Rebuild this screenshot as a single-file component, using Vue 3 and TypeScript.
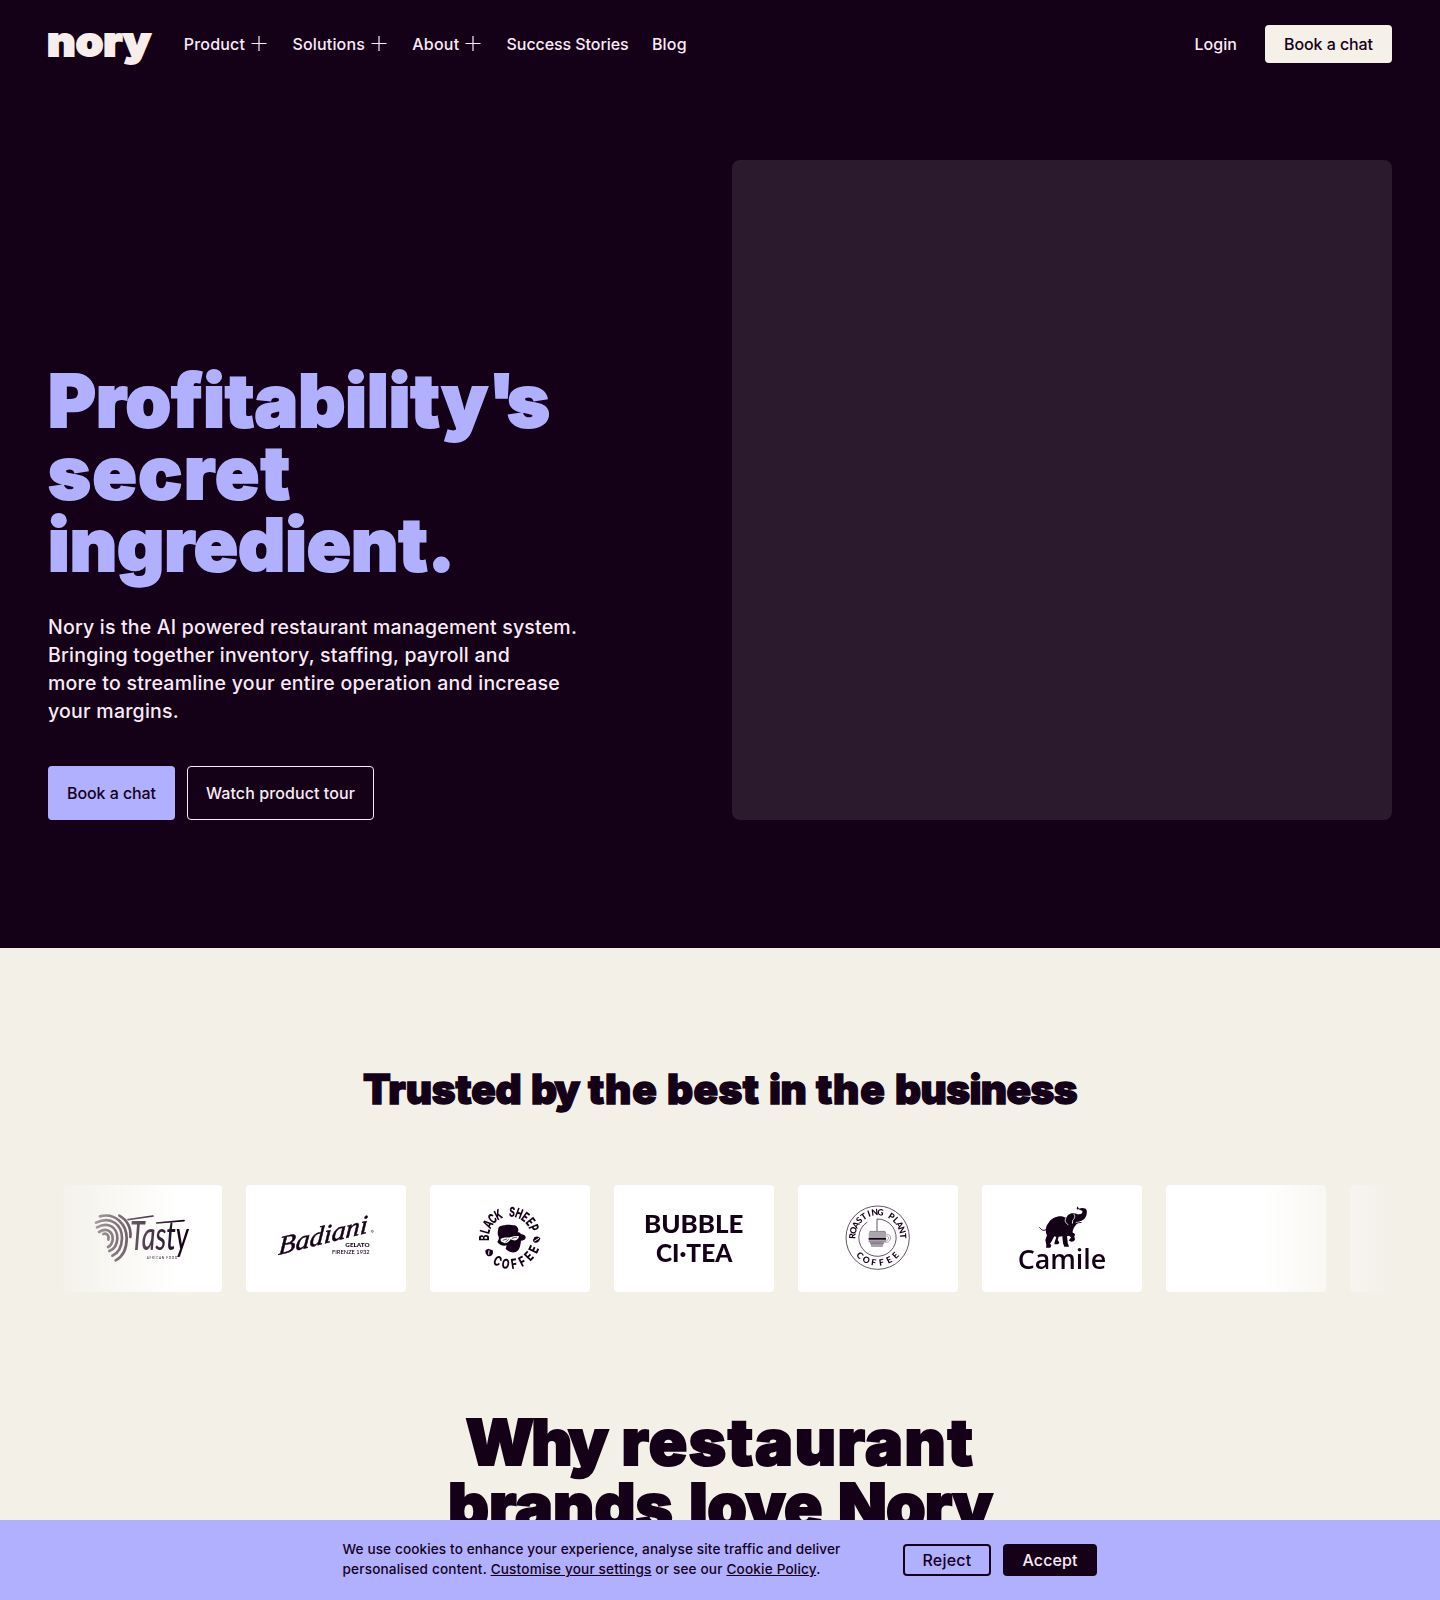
<script setup lang="ts">
interface Run { text: string; width: number }
interface NavItem { label: string; width: number; menu: boolean }
interface RingLetter { char: string; angle: number }

const navItems: NavItem[] = [
  { label: 'Product', width: 61.5, menu: true },
  { label: 'Solutions', width: 72.5, menu: true },
  { label: 'About', width: 47, menu: true },
  { label: 'Success Stories', width: 122, menu: false },
  { label: 'Blog', width: 35, menu: false },
]

const heroLines: Run[][] = [
  [{ text: 'Profitability', width: 440 }, { text: "'s", width: 55 }],
  [{ text: 'secret', width: 243.5 }],
  [{ text: 'ingredient.', width: 407 }],
]

const introLines: Run[] = [
  { text: 'Nory is the AI powered restaurant management system.', width: 529 },
  { text: 'Bringing together inventory, staffing, payroll and', width: 462 },
  { text: 'more to streamline your entire operation and increase', width: 512 },
  { text: 'your margins.', width: 131 },
]

const trustedWords: Run[] = [
  { text: 'Trusted', width: 158.5 },
  { text: 'by', width: 47.5 },
  { text: 'the', width: 69.5 },
  { text: 'best', width: 92.5 },
  { text: 'in', width: 37.5 },
  { text: 'the', width: 69.5 },
  { text: 'business', width: 182 },
]

const whyLines: Run[][] = [
  [{ text: 'Why', width: 140 }, { text: 'restaurant', width: 353 }],
  [{ text: 'brands', width: 225 }, { text: 'love', width: 133 }, { text: 'Nory', width: 154 }],
]

// Tracks a run of text so that it fills the given measure.
const vFit = {
  mounted(el: HTMLElement, binding: { value: number }) {
    const count = (el.textContent ?? '').length
    const natural = el.getBoundingClientRect().width
    el.style.letterSpacing = `${(binding.value - natural) / count}px`
  },
}

// Spreads the letters of a word evenly between two angles of a badge.
function ring(word: string, from: number, to: number): RingLetter[] {
  const step = (to - from) / (word.length - 1)
  return [...word].map((char, i) => ({ char, angle: from + step * i }))
}

const sheepTop = ring('BLACK SHEEP', -90, 68)
const sheepBottom = ring('COFFEE', 28, -64)
const plantTop = ring('ROASTING PLANT', -86, 86)
const plantBottom = ring('COFFEE', 45, -45)
</script>

<template>
  <div class="page">
    <section class="hero">
      <header class="bar">
        <svg class="logo" width="106" height="40" viewBox="0 0 106 40" role="img" aria-label="nory">
          <text x="-1" y="28.5" textLength="104" lengthAdjust="spacingAndGlyphs">nory</text>
        </svg>
        <nav class="nav">
          <a v-for="item in navItems" :key="item.label" class="nav-item">
            <span v-fit="item.width">{{ item.label }}</span>
            <svg v-if="item.menu" width="20" height="20" viewBox="0 0 20 20">
              <path d="M2.5 9.5H17.5M10 2V17" />
            </svg>
          </a>
        </nav>
        <div class="account">
          <a class="login"><span v-fit="42.5">Login</span></a>
          <a class="btn btn-cream"><span v-fit="89">Book a chat</span></a>
        </div>
      </header>
      <div class="hero-body">
        <div class="copy">
          <h1>
            <span v-for="(line, i) in heroLines" :key="i" class="line">
              <span v-for="run in line" :key="run.text" v-fit="run.width">{{ run.text }}</span>
            </span>
          </h1>
          <p class="intro">
            <span v-for="line in introLines" :key="line.text" v-fit="line.width" class="line">{{ line.text }}</span>
          </p>
          <div class="actions">
            <a class="btn btn-violet"><span v-fit="89">Book a chat</span></a>
            <a class="btn btn-outline"><span v-fit="149">Watch product tour</span></a>
          </div>
        </div>
        <div class="media"></div>
      </div>
    </section>

    <section class="trusted">
      <h2>
        <span v-for="(word, i) in trustedWords" :key="i" v-fit="word.width">{{ word.text }}</span>
      </h2>
      <div class="marquee">
        <div class="card">
          <svg viewBox="66 45 480 321">
            <g fill="none" stroke="#140017" stroke-width="8" stroke-linecap="round">
              <path d="M238 137C262 150 274 175 271 201" />
              <path d="M180 139C228 127 260 165 260 205C260 240 245 262 227 271" />
              <path d="M168 158C214 136 246 165 246 205C245 232 233 250 217 257" />
              <path d="M171 172C205 154 232 172 232 205C231 228 222 238 208 243" />
              <path d="M177 186C203 170 219 188 218 208C217 220 211 227 204 231" />
              <path d="M190 192C201 188 208 198 205 209" />
            </g>
            <path d="M264 149L339 138M350 159L432 152" fill="none" stroke="#140017" stroke-width="5" stroke-linecap="round" />
            <text class="hand" x="270" y="239" textLength="176" lengthAdjust="spacingAndGlyphs">Tasty</text>
            <text class="small" x="320" y="268" font-size="9" textLength="92">AFRICAN FOOD</text>
          </svg>
        </div>
        <div class="card">
          <svg viewBox="618 45 480 321">
            <text class="script" transform="translate(714 255) rotate(-14) skewX(-18)" textLength="276" lengthAdjust="spacingAndGlyphs">Badiani</text>
            <circle cx="997" cy="184" r="3" fill="none" stroke="#140017" stroke-width="1.5" />
            <text class="small heavy" x="916" y="231" font-size="18" textLength="73" lengthAdjust="spacingAndGlyphs">GELATO</text>
            <text class="small" x="876" y="251" font-size="18" textLength="113" lengthAdjust="spacingAndGlyphs">FIRENZE 1932</text>
          </svg>
        </div>
        <div class="card">
          <svg viewBox="30 45 480 321">
            <g class="sheep-ring">
              <text v-for="(l, i) in sheepTop" :key="'t' + i" :transform="`translate(270 203) rotate(${l.angle}) translate(0 -63) scale(.66 1)`">{{ l.char }}</text>
              <text v-for="(l, i) in sheepBottom" :key="'b' + i" :transform="`translate(270 203) rotate(${l.angle}) translate(0 94) scale(.74 1)`">{{ l.char }}</text>
            </g>
            <path fill="#140017" d="M236 200C230 190 235 182 235 175C238 165 251 167 257 165C266 163 276 166 284 166C294 169 298 180 293 187C300 185 301 192 306 193C312 194 318 198 317 204C315 211 309 211 303 212C301 226 300 239 288 246C277 250 264 245 257 236L260 226C249 230 238 224 232 216C236 209 238 206 236 200Z" />
            <path fill="#fff" d="M242 207C252 200 263 204 270 202C280 198 290 197 297 198C296 206 291 213 280 211L272 208C268 214 258 224 248 217C243 215 241 211 242 207Z" />
            <path fill="none" stroke="#140017" stroke-width="2" d="M248 211L261 207M276 205L291 201M256 217L266 208" />
            <path fill="#140017" d="M197 240L205 236L218 241C221 250 217 259 208 259C200 259 194 248 197 240ZM341 206C343 198 355 198 361 205C359 214 351 222 342 217C338 213 338 209 341 206Z" />
            <path fill="none" stroke="#fff" stroke-width="3" d="M207 241L206 254M343 213L357 205" />
          </svg>
        </div>
        <div class="card">
          <svg viewBox="582 45 480 321">
            <text class="bubble" x="672" y="188" textLength="298" lengthAdjust="spacingAndGlyphs">BUBBLE</text>
            <text class="bubble" x="708" y="275" textLength="229" lengthAdjust="spacingAndGlyphs">CI·TEA</text>
          </svg>
        </div>
        <div class="card">
          <svg viewBox="54 45 480 321">
            <g fill="none" stroke="#140017" stroke-width="2">
              <circle cx="293" cy="203" r="95" />
              <path d="M291 184V147A56 56 0 1 1 262 156" />
            </g>
            <g class="plant-ring">
              <text v-for="(l, i) in plantTop" :key="'t' + i" :transform="`translate(293 203) rotate(${l.angle}) translate(0 -67)`">{{ l.char }}</text>
              <text v-for="(l, i) in plantBottom" :key="'b' + i" :transform="`translate(293 203) rotate(${l.angle}) translate(0 84)`">{{ l.char }}</text>
            </g>
            <path fill="#aaa5ac" d="M269 184H315L318 190V216H312L308 231H274L270 216H266V190Z" />
            <path fill="none" stroke="#57495a" stroke-width="1.5" d="M269 184H315L318 190M266 216H317M270 221H312M319 193C336 191 336 218 317 217M319 198C328 197 328 212 318 211" />
            <path fill="#140017" d="M266 204H318V209H266Z" />
          </svg>
        </div>
        <div class="card">
          <svg viewBox="606 45 480 321">
            <path fill="#140017" d="M806 158C812 147 828 139 842 139C850 138 855 144 859 143C863 134 871 129 880 130C888 130 893 134 897 133C905 133 909 127 907 123C902 118 895 121 890 117L892 109L897 116C905 112 918 113 920 121C922 134 918 145 907 151C904 154 899 152 899 155L907 158L895 160C889 161 888 166 883 171C880 177 877 183 878 188C885 189 887 195 883 199L885 209C881 216 872 217 866 211L870 207L873 202L867 197L861 199L863 215C862 220 866 224 867 230H853L849 220L847 199L836 200L833 210L838 217L835 223H823L824 216L829 201L823 199L815 214L810 221L814 226L811 233H798L799 225L796 210L801 196C796 187 796 172 803 162Z" />
            <path fill="none" stroke="#140017" stroke-width="3" stroke-linecap="round" d="M801 177C792 184 786 181 782 176L779 173" />
            <path fill="none" stroke="#fff" stroke-width="2.5" d="M858 144C853 151 856 160 865 164M881 132C887 138 884 146 878 151L877 161" />
            <path fill="none" stroke="#fff" stroke-width="2" d="M887 158L901 155" />
            <text class="camile" x="713" y="298" textLength="266" lengthAdjust="spacingAndGlyphs">Camile</text>
          </svg>
        </div>
        <div class="card"></div>
        <div class="card"></div>
      </div>
    </section>

    <section class="why">
      <h2>
        <span v-for="(line, i) in whyLines" :key="i" class="line spaced">
          <span v-for="word in line" :key="word.text" v-fit="word.width">{{ word.text }}</span>
        </span>
      </h2>
    </section>

    <aside class="cookies">
      <p>
        <span v-fit="498" class="line-text">We use cookies to enhance your experience, analyse site traffic and deliver</span>
        <span v-fit="478" class="line-text">personalised content. <a>Customise your settings</a> or see our <a>Cookie Policy</a>.</span>
      </p>
      <div class="choices">
        <button class="reject"><span v-fit="49">Reject</span></button>
        <button class="accept"><span v-fit="55">Accept</span></button>
      </div>
    </aside>
  </div>
</template>

<style>
body {
  background: #f3f0e8;
}
</style>

<style scoped>
.page {
  position: relative;
  height: 1600px;
  overflow: hidden;
  background: #f3f0e8;
  color: #140017;
  font-family: Inter, "Liberation Sans", sans-serif;
  font-size: 16px;
  font-weight: 500;
}
.page * {
  box-sizing: border-box;
}
span {
  white-space: nowrap;
}
h1, h2, p {
  margin: 0;
}
.line {
  display: flex;
  width: max-content;
}
.line-text {
  display: block;
  width: max-content;
}
.spaced {
  gap: 16px;
}
.hero {
  height: 948px;
  padding: 0 48px;
  background: #140017;
  color: #fbebf8;
}
.bar {
  display: flex;
  align-items: center;
  height: 88px;
}
.logo {
  width: 106px;
  height: 40px;
  margin-top: 6px;
  overflow: visible;
}
.logo text {
  fill: #f7eeeb;
  stroke: #f7eeeb;
  stroke-width: 1.8px;
  font-size: 40px;
  font-weight: 900;
}
.nav {
  display: flex;
  gap: 23.3px;
  margin-left: 29.7px;
}
.nav-item {
  display: flex;
  align-items: center;
  gap: 4px;
}
.nav-item path {
  fill: none;
  stroke: #fbebf8;
  stroke-width: 1.2;
}
.account {
  display: flex;
  align-items: center;
  gap: 28px;
  margin-left: auto;
}
.btn {
  display: flex;
  align-items: center;
  justify-content: center;
  height: 54px;
  border-radius: 4px;
}
.btn-cream {
  width: 127px;
  height: 38px;
  background: #f5f0e8;
  color: #140017;
}
.btn-violet {
  width: 127px;
  background: #b1b0ff;
  color: #140017;
}
.btn-outline {
  width: 187px;
  border: 1px solid #fbebf8;
}
.hero-body {
  display: flex;
  justify-content: space-between;
  margin-top: 72px;
}
.copy {
  display: flex;
  flex-direction: column;
  justify-content: flex-end;
}
h1, h2 {
  font-weight: 900;
}
h1 {
  color: #b1b0ff;
  font-size: 73px;
  line-height: 72px;
  -webkit-text-stroke: 2px #b1b0ff;
}
.intro {
  margin: 32px 0 41px;
  font-size: 19.5px;
  line-height: 28px;
}
.actions {
  display: flex;
  gap: 12px;
}
.media {
  width: 660px;
  height: 660px;
  border-radius: 8px;
  background: #2b1a2e;
}
.trusted {
  padding: 120px 48px 0;
}
.trusted h2 {
  display: flex;
  justify-content: center;
  gap: 9.5px;
  font-size: 40.5px;
  line-height: 44px;
  -webkit-text-stroke: 1.4px #140017;
}
.marquee {
  display: flex;
  gap: 24px;
  margin-top: 73px;
  padding-left: 14px;
  overflow: hidden;
  -webkit-mask-image: linear-gradient(90deg, transparent, #000 10%, #000 90%, transparent);
  mask-image: linear-gradient(90deg, transparent, #000 10%, #000 90%, transparent);
}
.card {
  flex: 0 0 160px;
  height: 107px;
  border-radius: 4px;
  background: #fff;
}
.card svg {
  display: block;
  width: 160px;
  height: 107px;
  overflow: visible;
}
.card text {
  fill: #140017;
}
.hand {
  font-family: Lato, sans-serif;
  font-style: italic;
  font-weight: 500;
  font-size: 124px;
}
.script {
  font-family: "Liberation Serif", serif;
  font-style: italic;
  font-weight: 400;
  font-size: 76px;
  stroke: #140017;
  stroke-width: 1.5px;
}
.small {
  font-family: Lato, sans-serif;
}
.heavy {
  font-weight: 900;
}
.sheep-ring text {
  font-size: 41px;
  font-weight: 800;
  text-anchor: middle;
}
.plant-ring text {
  font-family: Lato, sans-serif;
  font-size: 26px;
  font-weight: 900;
  text-anchor: middle;
}
.bubble {
  font-family: Lato, sans-serif;
  font-size: 71px;
  font-weight: 900;
}
.camile {
  font-family: "Open Sans", sans-serif;
  font-size: 80px;
  font-weight: 600;
}
.why h2 {
  display: flex;
  flex-direction: column;
  align-items: center;
  margin-top: 118px;
  font-size: 63.5px;
  line-height: 64px;
  -webkit-text-stroke: 2px #140017;
}
.cookies {
  position: absolute;
  inset: auto 0 0;
  display: flex;
  height: 80px;
  padding-left: 342.5px;
  background: #b1b0ff;
}
.cookies p {
  width: 560.5px;
  padding-top: 19px;
  font-size: 13.6px;
  line-height: 20px;
}
.cookies a {
  text-decoration: underline;
}
.choices {
  display: flex;
  align-items: center;
  gap: 12px;
}
.choices button {
  display: flex;
  align-items: center;
  justify-content: center;
  height: 32px;
  padding: 0;
  border: 2px solid #140017;
  border-radius: 4px;
  background: transparent;
  color: #140017;
  font: inherit;
}
.choices .reject {
  width: 88px;
}
.choices .accept {
  width: 94px;
  background: #140017;
  color: #fbebf8;
}
</style>
